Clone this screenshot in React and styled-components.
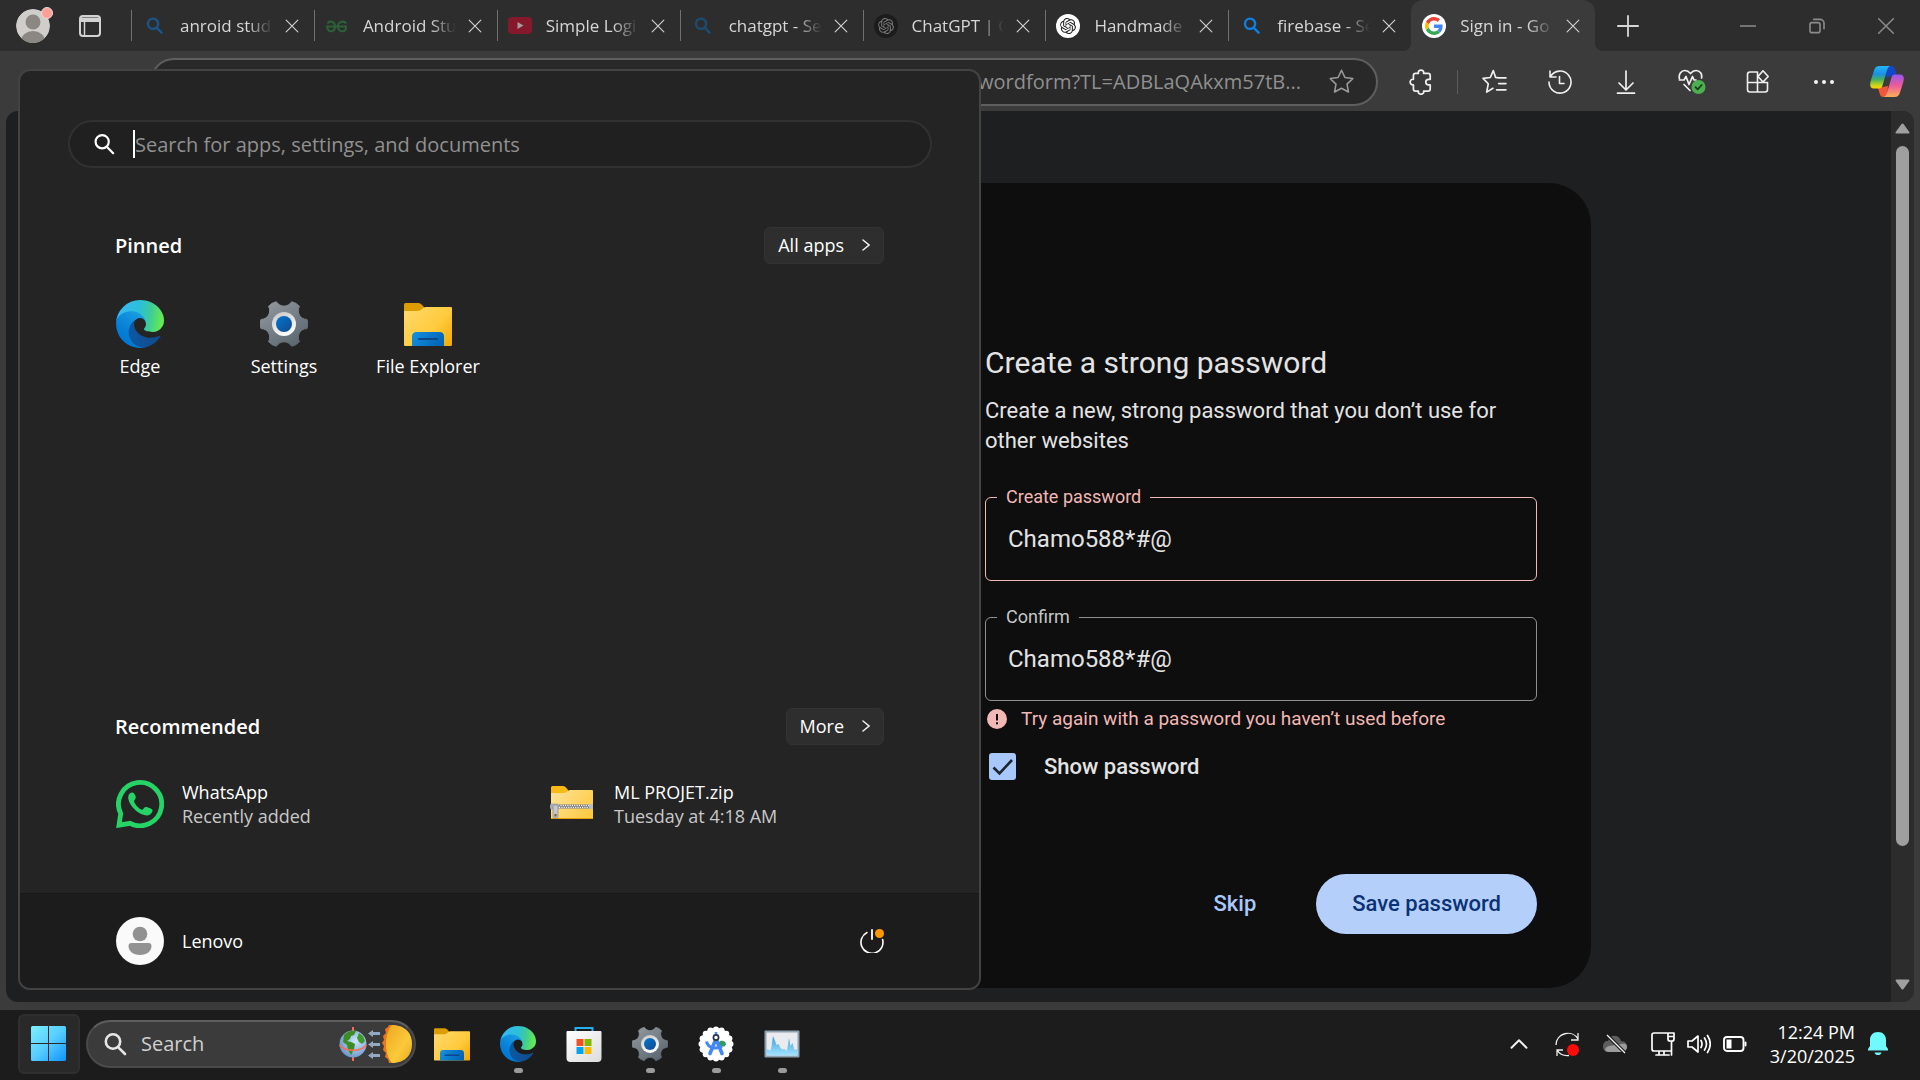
import React, { useState } from "react";
import styled, { createGlobalStyle, css } from "styled-components";

const GlobalStyle = createGlobalStyle`
  *, *::before, *::after { box-sizing: border-box; }
  body {
    margin: 0;
    background: #1c1c1c;
    color: #fff;
    font-family: "Open Sans", "Noto Sans", sans-serif;
    font-size: 18px;
    line-height: 24px;
  }
  button, input { font: inherit; color: inherit; }
  button { margin: 0; padding: 0; border: 0; background: none; cursor: pointer; }
  h1, h2, p, ul { margin: 0; padding: 0; font-weight: inherit; list-style: none; }
  svg { display: block; flex: none; }
`;

/* ---------- layout ---------- */

const Desktop = styled.div`
  position: relative;
  display: flex;
  flex-direction: column;
  min-height: 100vh;
  overflow: hidden;
`;

const Browser = styled.div`
  flex: 1;
  display: flex;
  flex-direction: column;
  background: #3b3b3b;
`;

const TabBar = styled.header`
  display: flex;
  align-items: center;
  height: 51px;
  padding-left: 16px;
  background: #2d2d2d;
`;

const ProfileButton = styled.button`
  margin-right: 26px;
`;

const WorkspaceButton = styled.button`
  margin-right: 30px;
`;

const TabStrip = styled.nav`
  display: flex;
  flex: 0 1 1464px;
  min-width: 0;
  height: 100%;
`;

const Tab = styled.div`
  position: relative;
  flex: 1 1 0;
  min-width: 0;
  display: flex;
  align-items: center;
  padding: 0 10px;

  ${(p) =>
    p.$active
      ? css`
          background: #3b3b3b;
          border-radius: 12px 12px 0 0;
          padding-left: 11px;
          &::before,
          &::after {
            content: "";
            position: absolute;
            bottom: 0;
            width: 8px;
            height: 8px;
          }
          &::before {
            right: 100%;
            background: radial-gradient(circle at 0 0, #2d2d2d 8px, #3b3b3b 8px);
          }
          &::after {
            left: 100%;
            background: radial-gradient(circle at 100% 0, #2d2d2d 8px, #3b3b3b 8px);
          }
        `
      : css`
          &::before {
            content: "";
            width: 1px;
            height: 31px;
            margin: 0 10px 0 -10px;
            background: #707070;
          }
        `}
`;

const TabTitle = styled.button`
  flex: 1;
  min-width: 0;
  display: flex;
  align-items: center;
  gap: 14px;
  text-align: left;
  color: #d6d6d6;
`;

const TabIcon = styled.span`
  width: 24px;
  display: grid;
  place-items: center;
  flex: none;
`;

const TabText = styled.span`
  flex: 1;
  min-width: 0;
  overflow: hidden;
  white-space: nowrap;
  font-size: 17px;
  mask-image: linear-gradient(to right, #000 72%, transparent 100%);
`;

const CloseTab = styled.button`
  width: 24px;
  height: 24px;
  display: grid;
  place-items: center;
  margin-left: 7px;
  color: #d0d0d0;
`;

const IconButton = styled.button`
  width: ${(p) => p.$w || 66}px;
  height: 48px;
  flex: none;
  display: grid;
  place-items: center;
  color: ${(p) => p.$color || "#f0f0f0"};
`;

const WindowControls = styled.div`
  display: flex;
  margin-left: auto;
`;

const Toolbar = styled.div`
  display: flex;
  align-items: center;
  height: 60px;
  padding: 1px 3px 0 11px;
`;

const AddressBar = styled.label`
  flex: 1;
  min-width: 0;
  display: flex;
  align-items: center;
  height: 48px;
  margin: 0 10px 0 7px;
  padding-left: 30px;
  border: 2px solid #5e5e5e;
  border-radius: 24px;
  background: #292929;
`;

const AddressInput = styled.input`
  flex: 1;
  min-width: 0;
  border: 0;
  outline: 0;
  padding: 0;
  background: none;
  text-align: right;
  font-size: 20px;
  line-height: 28px;
  color: #909090;
`;

const StarButton = styled(IconButton)`
  margin: 0 2px 0 7px;
`;

const Divider = styled.span`
  width: 1px;
  height: 24px;
  margin: 0 3px;
  background: #5c5c5c;
`;

const Viewport = styled.main`
  flex: 1;
  display: flex;
  margin: 0 6px 8px;
  border-radius: 12px;
  overflow: hidden;
  background: #1e1f20;
`;

const PageArea = styled.div`
  flex: 1;
  display: flex;
  justify-content: center;
  align-items: flex-start;
  padding: 72px 24px 14px;
  font-family: Roboto, sans-serif;
  color: #e3e3e3;
`;

const Card = styled.section`
  display: flex;
  justify-content: flex-end;
  width: 100%;
  max-width: 1285px;
  padding: 160px 54px 54px;
  border-radius: 42px;
  background: #0e0e0e;
`;

const Form = styled.form`
  width: 100%;
  max-width: 552px;
`;

const FormTitle = styled.h1`
  font-size: 30px;
  line-height: 40px;
`;

const FormText = styled.p`
  margin: 13px 0 32px;
  font-size: 22px;
  line-height: 30px;
`;

const Field = styled.fieldset`
  margin: 0;
  padding: 0 11px 8px;
  min-width: 0;
  border: 1px solid ${(p) => (p.$error ? "#f2b8b5" : "#8e918f")};
  border-radius: 6px;
  & + & { margin-top: 27px; }
`;

const FieldLegend = styled.legend`
  padding: 0 9px;
  font-size: 18px;
  line-height: 18px;
  color: ${(p) => (p.$error ? "#f2b8b5" : "#c4c7c5")};
`;

const FieldInput = styled.input`
  display: block;
  width: 100%;
  height: 66px;
  padding: 0 11px;
  border: 0;
  outline: 0;
  background: none;
  font-size: 24px;
`;

const ErrorText = styled.p`
  display: flex;
  align-items: center;
  gap: 14px;
  margin: 8px 0 24px;
  padding-left: 2px;
  font-size: 19px;
  line-height: 20px;
  color: #f2b8b5;
`;

const CheckRow = styled.label`
  display: flex;
  align-items: center;
  gap: 28px;
  padding-left: 4px;
  font-size: 22px;
  line-height: 27px;
  font-weight: 500;
`;

const CheckInput = styled.input`
  appearance: none;
  width: 27px;
  height: 27px;
  margin: 0;
  border: 2px solid #a8c7fa;
  border-radius: 3px;
  &:checked { background: #a8c7fa; }
`;

const CheckBoxWrap = styled.span`
  display: grid;
  & > * { grid-area: 1 / 1; }
  & > svg { pointer-events: none; }
`;

const Actions = styled.div`
  display: flex;
  justify-content: flex-end;
  gap: 24px;
  margin-top: 94px;
  font-size: 22px;
  font-weight: 500;
`;

const TextButton = styled.button`
  height: 60px;
  padding: 0 36px;
  border-radius: 30px;
  color: #a8c7fa;
`;

const FilledButton = styled(TextButton)`
  background: #b5cffb;
  color: #0a3275;
`;

const Scrollbar = styled.div`
  width: 23px;
  display: flex;
  flex-direction: column;
  align-items: center;
  padding: 12px 0;
  background: #2c2c2c;
`;

const ScrollThumb = styled.div`
  width: 13px;
  height: 700px;
  margin: 12px 0 auto;
  border-radius: 7px;
  background: #9f9f9f;
`;

/* ---------- start menu ---------- */

const StartMenu = styled.aside`
  position: absolute;
  left: 18px;
  bottom: 90px;
  width: 963px;
  display: flex;
  flex-direction: column;
  border: 2px solid #434343;
  border-radius: 12px;
  overflow: hidden;
  background: #242424;
`;

const MenuSearch = styled.label`
  display: flex;
  align-items: center;
  gap: 18px;
  height: 48px;
  margin: 49px 47px 0 48px;
  padding: 0 24px 0 23px;
  border: 2px solid #313131;
  border-radius: 24px;
  background: #202020;
`;

const MenuSearchInput = styled.input`
  flex: 1;
  min-width: 0;
  height: 28px;
  padding: 0;
  border: 0;
  border-left: 2px solid #fff;
  outline: 0;
  background: none;
  font-size: 20px;
  &::placeholder { color: #909090; opacity: 1; }
`;

const SectionHead = styled.div`
  display: flex;
  align-items: center;
  justify-content: space-between;
  padding: 0 95px;
`;

const SectionTitle = styled.h2`
  font-size: 20px;
  line-height: 28px;
  font-weight: 600;
`;

const MoreButton = styled.button`
  display: flex;
  align-items: center;
  gap: 18px;
  height: 37px;
  padding: 0 13px 2px;
  border: 1px solid #333;
  border-radius: 6px;
  background: #2e2e2e;
`;

const Pinned = styled.section`
  padding-top: 59px;
  min-height: 540px;
`;

const AppGrid = styled.ul`
  display: grid;
  grid-template-columns: repeat(6, 144px);
  padding: 30px 0 0 48px;
`;

const AppButton = styled.button`
  width: 100%;
  display: flex;
  flex-direction: column;
  align-items: center;
  gap: 6px;
  padding-top: 6px;
`;

const RecGrid = styled.ul`
  display: grid;
  grid-template-columns: 432px 1fr;
  padding: 35px 95px 65px 96px;
`;

const RecButton = styled.button`
  display: flex;
  align-items: center;
  gap: 18px;
  text-align: left;
`;

const RecNote = styled.small`
  display: block;
  font-size: inherit;
  color: #c8c8c8;
`;

const MenuFooter = styled.footer`
  display: flex;
  align-items: center;
  justify-content: space-between;
  height: 95px;
  padding: 0 95px 0 96px;
  border-top: 1px solid #181818;
  background: #1c1c1c;
`;

/* ---------- taskbar ---------- */

const Taskbar = styled.footer`
  display: flex;
  align-items: center;
  height: 70px;
  padding: 0 25px 2px 18px;
  background: #1c1c1c;
`;

const StartButton = styled.button`
  display: grid;
  place-items: center;
  width: 62px;
  height: 60px;
  margin-right: 6px;
  border: 2px solid #2f2f2f;
  border-radius: 6px;
  background: #292929;
`;

const TaskSearch = styled.label`
  display: flex;
  align-items: center;
  gap: 14px;
  width: 330px;
  height: 48px;
  margin-right: 3px;
  padding: 0 0 0 15px;
  border: 2px solid #4a4a4a;
  border-top-color: #5e5e5e;
  border-radius: 24px;
  background: #3b3b3b;
`;

const TaskSearchInput = styled.input`
  flex: 1;
  min-width: 0;
  padding: 0;
  border: 0;
  outline: 0;
  background: none;
  font-size: 20px;
  line-height: 28px;
  &::placeholder { color: #d0d0d0; opacity: 1; }
`;

const TaskApp = styled.button`
  position: relative;
  width: 66px;
  height: 60px;
  display: grid;
  place-items: center;
  ${(p) =>
    p.$running &&
    css`
      &::after {
        content: "";
        position: absolute;
        bottom: 1px;
        left: 29px;
        width: 9px;
        height: 5px;
        border-radius: 3px;
        background: #9a9a9a;
      }
    `}
`;

const Tray = styled.div`
  display: flex;
  align-items: center;
  margin-left: auto;
`;

const TrayGroup = styled.button`
  display: flex;
  gap: 12px;
  padding: 12px;
`;

const Clock = styled.button`
  width: 102px;
  padding-right: 6px;
  text-align: right;
  white-space: nowrap;
  line-height: 24px;
`;

/* ---------- icons ---------- */

const Line = ({ size = 24, w = 2, children, ...rest }) => (
  <svg width={size} height={size} viewBox="0 0 24 24" fill="none" stroke="currentColor"
    strokeWidth={w} strokeLinecap="round" strokeLinejoin="round" aria-hidden="true" {...rest}>
    {children}
  </svg>
);

const SearchGlyph = ({ size, color, w = 2.6 }) => (
  <Line size={size} w={w} color={color}>
    <circle cx="10" cy="9.5" r="7.2" />
    <path d="M15.3 15.3 22 22" />
  </Line>
);

const CloseGlyph = ({ size = 16 }) => (
  <Line size={size} w={2}><path d="M2 2 22 22M22 2 2 22" /></Line>
);

const EdgeIcon = ({ size = 48, id }) => (
  <svg width={size} height={size} viewBox="0 0 256 256" aria-hidden="true">
    <defs>
      <linearGradient id={`${id}a`} x1="60" y1="177" x2="241" y2="177" gradientUnits="userSpaceOnUse">
        <stop stopColor="#0c59a4" /><stop offset="1" stopColor="#114a8b" />
      </linearGradient>
      <linearGradient id={`${id}b`} x1="150" y1="90" x2="45" y2="220" gradientUnits="userSpaceOnUse">
        <stop stopColor="#1b9de2" /><stop offset=".2" stopColor="#1595df" />
        <stop offset=".7" stopColor="#0680d7" /><stop offset="1" stopColor="#0078d4" />
      </linearGradient>
      <linearGradient id={`${id}c`} x1="10" y1="80" x2="245" y2="120" gradientUnits="userSpaceOnUse">
        <stop stopColor="#35b8f6" /><stop offset=".45" stopColor="#2cbfd9" />
        <stop offset=".7" stopColor="#3ccb9c" /><stop offset="1" stopColor="#66eb4e" />
      </linearGradient>
    </defs>
    <path fill={`url(#${id}a)`} d="M231 190.5c-3.4 1.8-6.9 3.4-10.5 4.7a101.9 101.9 0 0 1-35.9 6.5c-47.3 0-88.5-32.6-88.5-74.3a31.5 31.5 0 0 1 16.4-27.7c-42.8 1.8-53.8 46.4-53.8 72.5 0 73.9 68.1 81.4 82.8 81.4 7.9 0 19.8-2.3 27-4.6l1.3-.4a128.3 128.3 0 0 0 66.6-52.8 4 4 0 0 0-5.4-5.3z" />
    <path fill={`url(#${id}b)`} d="M105.7 241.4a79.2 79.2 0 0 1-22.7-21.3 80.7 80.7 0 0 1 29.5-120.4c3.1-1.5 8.5-4.1 15.5-4a32.4 32.4 0 0 1 25.7 13 31.9 31.9 0 0 1 6.4 18.7c0-.2 24.5-79.6-80-79.6-43.9 0-80 41.7-80 78.2a130.2 130.2 0 0 0 12.1 56 128 128 0 0 0 156.4 67.1 75.6 75.6 0 0 1-62.8-7.7z" />
    <path fill={`url(#${id}c)`} d="M152.3 148.9c-.8 1-3.3 2.5-3.3 5.7 0 2.6 1.7 5.1 4.7 7.2 14.4 10 41.5 8.7 41.6 8.7a59.6 59.6 0 0 0 30.3-8.4 61.4 61.4 0 0 0 30.4-52.9c.3-22.4-8-37.3-11.3-43.9C223.5 23.8 177.7 0 128 0A128 128 0 0 0 0 126.2c.5-36.5 36.8-66 80-66 3.5 0 23.5.3 42 10 16.3 8.6 24.9 19 30.9 29.2 6.2 10.7 7.3 24.2 7.3 29.5 0 5.4-2.8 13.4-7.9 20z" />
  </svg>
);

const gearPath = (() => {
  const p = (r, deg) => {
    const a = (deg * Math.PI) / 180;
    return `${(24 + r * Math.cos(a)).toFixed(2)} ${(24 + r * Math.sin(a)).toFixed(2)}`;
  };
  let d = `M${p(23.5, -11)}`;
  for (let a = 0; a < 360; a += 60) {
    d += `Q${p(24.6, a)} ${p(23.5, a + 11)}C${p(16.8, a + 17)} ${p(16.8, a + 43)} ${p(23.5, a + 49)}`;
  }
  return `${d}Z`;
})();

const SettingsIcon = ({ size = 48, id }) => (
  <svg width={size} height={size} viewBox="0 0 48 48" aria-hidden="true">
    <defs>
      <linearGradient id={`${id}a`} x1="8" y1="4" x2="38" y2="46" gradientUnits="userSpaceOnUse">
        <stop stopColor="#8f959b" /><stop offset="1" stopColor="#5a6670" />
      </linearGradient>
      <linearGradient id={`${id}b`} x1="18" y1="14" x2="28" y2="36" gradientUnits="userSpaceOnUse">
        <stop stopColor="#cfcfcf" /><stop offset="1" stopColor="#fff" />
      </linearGradient>
      <linearGradient id={`${id}c`} x1="18" y1="18" x2="30" y2="30" gradientUnits="userSpaceOnUse">
        <stop stopColor="#0370c8" /><stop offset="1" stopColor="#114f96" />
      </linearGradient>
    </defs>
    <path d={gearPath} fill={`url(#${id}a)`} stroke={`url(#${id}a)`} strokeWidth="1" strokeLinejoin="round" />
    <circle cx="24" cy="24" r="12" fill={`url(#${id}b)`} />
    <circle cx="24" cy="24" r="8" fill={`url(#${id}c)`} />
  </svg>
);

const FolderIcon = ({ size = 48, id }) => (
  <svg width={size} height={size} viewBox="0 0 48 48" aria-hidden="true">
    <defs>
      <linearGradient id={`${id}a`} x1="4" y1="8" x2="46" y2="46" gradientUnits="userSpaceOnUse">
        <stop stopColor="#ffd869" /><stop offset=".6" stopColor="#ffca3c" /><stop offset="1" stopColor="#f2ab00" />
      </linearGradient>
      <linearGradient id={`${id}b`} x1="10" y1="32" x2="36" y2="48" gradientUnits="userSpaceOnUse">
        <stop stopColor="#148fdd" /><stop offset="1" stopColor="#0063b6" />
      </linearGradient>
    </defs>
    <path fill="#dd9c02" d="M0 4.5Q0 3 1.5 3H14q2 0 3 1l3 3v6H0z" />
    <path fill={`url(#${id}a)`} d="M0 11h13.5q2 0 3.2-1l3-2.3q.8-.7 2-.7H47q1 0 1 1v37q0 1-1 1H1q-1 0-1-1z" />
    <path fill={`url(#${id}b)`} d="M8 46v-9.5q0-4.5 4.5-4.5h23q4.5 0 4.5 4.5V46z" />
    <path d="M15 39h18" stroke="#0f4585" strokeWidth="2" strokeLinecap="round" />
  </svg>
);

const ZipIcon = () => (
  <svg width="48" height="48" viewBox="0 0 48 48" aria-hidden="true">
    <defs>
      <linearGradient id="zipBody" x1="4" y1="10" x2="44" y2="40" gradientUnits="userSpaceOnUse">
        <stop stopColor="#ffe39a" /><stop offset="1" stopColor="#ffc83a" />
      </linearGradient>
    </defs>
    <path fill="#fbb917" d="M3 7.5Q3 6 4.5 6H15q2 0 3 1.5L20 10v6H3z" />
    <path fill="url(#zipBody)" d="M3 13h13q1.5 0 2.5-1l1.5-1.2q1-.8 2-.8h22q1 0 1 1v27q0 1-1 1H4q-1 0-1-1z" />
    <path d="M3 38.5h42" stroke="#e8a100" strokeWidth="1" />
    <path d="M10 26.5h32" stroke="#6a6a6a" strokeWidth="4" />
    <path d="M10 25.5h32M11 27.5h31" stroke="#f4f4f4" strokeWidth="1.5" strokeDasharray="1.3 1" />
    <rect x="41" y="24" width="4" height="5" fill="#b9bcc0" />
    <rect x="2" y="23.5" width="9" height="6" rx="2" fill="#a9adb1" />
    <rect x="5" y="25" width="5" height="13" rx="1" fill="#c5c8cb" stroke="#85898d" strokeWidth=".7" />
    <rect x="6.5" y="34" width="2" height="2.5" fill="#7d6320" />
  </svg>
);

const WhatsAppIcon = () => (
  <svg width="48" height="48" viewBox="0 0 48 48" aria-hidden="true">
    <path d="M4.7 33.6A21.6 21.6 0 1 1 14.2 43.3L3 45.2Z" fill="none" stroke="#25d366" strokeWidth="4.8" />
    <path fill="#25d366" d="M12.2 17c.2-3 2.5-4.5 4.3-4.4 2 .2 3.5 3.9 3.3 5.2-.3 1.7-1.8 2.5-1.8 3.2.5 3 4.5 7.8 8 8.8 1 .2 2-2.5 3.5-2.8 1.5-.3 6.5 1.8 7 3 .3 1.5-1.5 5.5-5.5 5.4C22 35 12 24.5 12.2 17z" />
  </svg>
);

const UserIcon = () => (
  <svg width="48" height="48" viewBox="0 0 48 48" aria-hidden="true">
    <circle cx="24" cy="24" r="24" fill="#fafafa" />
    <circle cx="24" cy="17" r="7.3" fill="#929292" />
    <path fill="#929292" d="M15.5 26h17q3 0 3 3c0 5-4.5 9-11.5 9s-11.5-4-11.5-9q0-3 3-3z" />
  </svg>
);

const PowerIcon = () => (
  <svg width="24" height="24" viewBox="0 0 24 24" fill="none" aria-hidden="true">
    <path d="M7 3.5A11 11 0 1 0 22.6 10.500" stroke="#fff" strokeWidth="1.6" strokeLinecap="round" />
    <path d="M12 1v9" stroke="#e8e8e8" strokeWidth="2" strokeLinecap="round" />
    <circle cx="19.5" cy="4.5" r="4.5" fill="#ff9800" />
  </svg>
);

const ProfileIcon = () => (
  <svg width="37" height="37" viewBox="0 0 37 37" aria-hidden="true">
    <defs><clipPath id="profileClip"><circle cx="17" cy="19" r="17" /></clipPath></defs>
    <g clipPath="url(#profileClip)">
      <circle cx="17" cy="19" r="17" fill="#d0cecb" />
      <circle cx="17" cy="15" r="7.5" fill="#8b8783" />
      <ellipse cx="17" cy="34" rx="12" ry="10" fill="#8b8783" />
    </g>
    <circle cx="31" cy="6" r="5.5" fill="#ff9f97" stroke="#e8dcd8" strokeWidth="1" />
  </svg>
);

const WorkspaceIcon = () => (
  <svg width="22" height="22" viewBox="0 0 22 22" aria-hidden="true">
    <rect x="1" y="1" width="20" height="20" rx="3" fill="none" stroke="#d2d2d2" strokeWidth="2" />
    <path d="M1 2.5h20V7H1z" fill="#d2d2d2" />
    <path d="M5.5 7v14" stroke="#d2d2d2" strokeWidth="1.5" />
  </svg>
);

const GfgIcon = () => (
  <svg width="24" height="24" viewBox="0 0 24 24" fill="none" stroke="#2c6137" strokeWidth="2" aria-hidden="true">
    <path d="M1 12.5h21" />
    <path d="M2.5 9.500C4 6.500 10 7 10 12.500S4.500 18.500 2.500 15V12.500" />
    <path d="M21 9.500C19.500 6.500 13 7 13 12.500s6 6 8 2.500V12.500" />
  </svg>
);

const YouTubeIcon = () => (
  <svg width="24" height="17" viewBox="0 0 24 17" aria-hidden="true">
    <rect width="24" height="17" rx="4" fill="#86182c" />
    <path d="M9.5 5v7l6-3.5z" fill="#a89a9d" />
  </svg>
);

const OpenAiIcon = ({ bg, fg }) => (
  <svg width="24" height="24" viewBox="0 0 36 36" aria-hidden="true">
    <circle cx="18" cy="18" r="18" fill={bg} />
    <path transform="translate(6 6)" fill={fg} d="M22.2819 9.8211a5.9847 5.9847 0 0 0-.5157-4.9108 6.0462 6.0462 0 0 0-6.5098-2.9A6.0651 6.0651 0 0 0 4.9807 4.1818a5.9847 5.9847 0 0 0-3.9977 2.9 6.0462 6.0462 0 0 0 .7427 7.0966 5.98 5.98 0 0 0 .511 4.9107 6.051 6.051 0 0 0 6.5146 2.9001A5.9847 5.9847 0 0 0 13.2599 24a6.0557 6.0557 0 0 0 5.7718-4.2058 5.9894 5.9894 0 0 0 3.9977-2.9001 6.0557 6.0557 0 0 0-.7475-7.0729zm-9.022 12.6081a4.4755 4.4755 0 0 1-2.8764-1.0408l.1419-.0804 4.7783-2.7582a.7948.7948 0 0 0 .3927-.6813v-6.7369l2.02 1.1686a.071.071 0 0 1 .038.052v5.5826a4.504 4.504 0 0 1-4.4945 4.4944zm-9.6607-4.1254a4.4708 4.4708 0 0 1-.5346-3.0137l.142.0852 4.783 2.7582a.7712.7712 0 0 0 .7806 0l5.8428-3.3685v2.3324a.0804.0804 0 0 1-.0332.0615L9.74 19.9502a4.4992 4.4992 0 0 1-6.1408-1.6464zM2.3408 7.8956a4.485 4.485 0 0 1 2.3655-1.9728V11.6a.7664.7664 0 0 0 .3879.6765l5.8144 3.3543-2.0201 1.1685a.0757.0757 0 0 1-.071 0l-4.8303-2.7865A4.504 4.504 0 0 1 2.3408 7.872zm16.5963 3.8558L13.1038 8.364 15.1192 7.2a.0757.0757 0 0 1 .071 0l4.8303 2.7913a4.4944 4.4944 0 0 1-.6765 8.1042v-5.6772a.79.79 0 0 0-.407-.667zm2.0107-3.0231l-.142-.0852-4.7735-2.7818a.7759.7759 0 0 0-.7854 0L9.409 9.2297V6.8974a.0662.0662 0 0 1 .0284-.0615l4.8303-2.7866a4.4992 4.4992 0 0 1 6.6802 4.66zM8.3065 12.863l-2.02-1.1638a.0804.0804 0 0 1-.038-.0567V6.0742a4.4992 4.4992 0 0 1 7.3757-3.4537l-.142.0805L8.704 5.459a.7948.7948 0 0 0-.3927.6813zm1.0976-2.3654l2.602-1.4998 2.6069 1.4998v2.9994l-2.5974 1.4997-2.6067-1.4997Z" />
  </svg>
);

const GoogleIcon = () => (
  <svg width="24" height="24" viewBox="-8 -8 64 64" aria-hidden="true">
    <circle cx="24" cy="24" r="32" fill="#fff" />
    <path fill="#EA4335" d="M24 9.5c3.54 0 6.71 1.22 9.21 3.6l6.85-6.85C35.9 2.38 30.47 0 24 0 14.62 0 6.51 5.38 2.56 13.22l7.98 6.19C12.43 13.72 17.74 9.5 24 9.5z" />
    <path fill="#4285F4" d="M46.98 24.55c0-1.57-.15-3.09-.38-4.55H24v9.02h12.94c-.58 2.96-2.26 5.48-4.78 7.18l7.73 6c4.51-4.18 7.09-10.36 7.09-17.65z" />
    <path fill="#FBBC05" d="M10.53 28.59c-.48-1.45-.76-2.99-.76-4.59s.27-3.14.76-4.59l-7.98-6.19C.92 16.46 0 20.12 0 24c0 3.88.92 7.54 2.56 10.78l7.97-6.19z" />
    <path fill="#34A853" d="M24 48c6.48 0 11.93-2.13 15.89-5.81l-7.73-6c-2.15 1.45-4.92 2.3-8.16 2.3-6.26 0-11.57-4.22-13.47-9.91l-7.98 6.19C6.51 42.62 14.62 48 24 48z" />
  </svg>
);

const CopilotIcon = () => (
  <svg width="34" height="31" viewBox="0 0 34 31" aria-hidden="true">
    <defs>
      <linearGradient id="cpLeft" x1="0" y1="0" x2="0" y2="1">
        <stop stopColor="#22b8f2" /><stop offset=".35" stopColor="#1a8fe6" />
        <stop offset=".6" stopColor="#45b061" /><stop offset=".85" stopColor="#c9d41a" /><stop offset="1" stopColor="#ffd500" />
      </linearGradient>
      <linearGradient id="cpRight" x1="0" y1="0" x2="0" y2="1">
        <stop stopColor="#9a55f0" /><stop offset=".5" stopColor="#ee5b98" /><stop offset="1" stopColor="#ffb057" />
      </linearGradient>
    </defs>
    <path fill="#1546c8" d="M16 0h5c2.5 0 3.6 1.4 4.3 4l1.2 4.6-6 1.4-4 2z" />
    <path fill="#f2573a" d="M8 22l10-2-1 11h-3.5c-2.4 0-3.3-1.4-4-4z" />
    <path fill="url(#cpLeft)" d="M9.5 0H20c-2 1-2.7 3.2-3.5 6l-4 13.5c-.7 2.2-1.6 3-3.5 3H4c-4 0-4.3-3.5-3.3-7.5L4 4.5C4.9 1.3 6.6 0 9.5 0z" />
    <path fill="url(#cpRight)" d="M25 8.5h5c4 0 4.3 3.5 3.3 7.5L30 26.5c-.9 3.2-2.6 4.5-5.5 4.5H14c2-1 2.7-3.2 3.5-6l4-13.5c.7-2.2 1.6-3 3.5-3z" />
  </svg>
);

const HeartIcon = () => (
  <svg width="28" height="28" viewBox="0 0 28 28" fill="none" stroke="#f0f0f0" strokeWidth="1.7"
    strokeLinecap="round" strokeLinejoin="round" aria-hidden="true">
    <path d="M1.5 11C.3 6.5 3 2.5 7 2.5c2.5 0 4 1.2 5.5 3 1.5-1.8 3-3 5.5-3 4 0 6.5 3.5 5.5 7.5" />
    <path d="M1.5 12H6l2-3.5 3 8 3.5-8 1.5 3.5h2M6 16.5l6 6" />
    <circle cx="20.5" cy="19" r="7" fill="#4caf50" stroke="none" />
    <path d="m17.5 19.2 2.2 2.2 4-4.4" stroke="#173a19" />
  </svg>
);

const StoreIcon = () => (
  <svg width="36" height="36" viewBox="0 0 36 36" aria-hidden="true">
    <defs>
      <linearGradient id="storeBag" x1="0" y1="0" x2="1" y2="1"><stop stopColor="#fff" /><stop offset="1" stopColor="#dcdcdc" /></linearGradient>
    </defs>
    <path d="M9.5 7V2h17v5" fill="none" stroke="#25aef0" strokeWidth="2" />
    <path fill="url(#storeBag)" d="M.5 6q0-1 1-1h33q1 0 1 1v26q0 4-4 4h-27q-4 0-4-4z" />
    <path fill="#f25022" d="M10.500 13h7v7h-7z" /><path fill="#7fba00" d="M18.500 13h7v7h-7z" />
    <path fill="#00a4ef" d="M10.500 21h7v7h-7z" /><path fill="#ffb900" d="M18.500 21h7v7h-7z" />
  </svg>
);

const scallop = Array.from({ length: 16 }, (_, i) => {
  const a = (i * Math.PI) / 8;
  return [18 + 14.5 * Math.cos(a), 18 + 14.5 * Math.sin(a)];
});

const StudioIcon = () => (
  <svg width="36" height="36" viewBox="0 0 36 36" aria-hidden="true">
    <circle cx="18" cy="18" r="16" fill="#fff" />
    {scallop.map(([x, y]) => <circle key={`${x}-${y}`} cx={x} cy={y} r="3" fill="#fff" />)}
    <path fill="#2f9e57" d="M21 16c2-2 7-1.500 7 2.500l-1.500 2h-5z" />
    <path d="M17.500 14 12 27.500M18.500 14 24 27.500" stroke="#4386f5" strokeWidth="3.6" strokeLinecap="round" />
    <path d="M8.500 15.500c1.500 7 10 8 15.500 4.500" stroke="#4386f5" strokeWidth="3" fill="none" />
    <path d="M18 6v4" stroke="#4386f5" strokeWidth="2.5" />
    <circle cx="18" cy="11.5" r="2.6" fill="#fff" stroke="#26334d" strokeWidth="1.7" />
  </svg>
);

const MonitorAppIcon = () => (
  <svg width="36" height="36" viewBox="0 0 36 36" aria-hidden="true">
    <defs>
      <linearGradient id="chartFill" x1="0" y1="0" x2="0" y2="1"><stop stopColor="#3aa0d8" /><stop offset="1" stopColor="#a4e2ff" /></linearGradient>
    </defs>
    <rect x=".5" y="4.5" width="35" height="27" rx="1" fill="#8fa0af" />
    <rect x="2.5" y="6.5" width="31" height="23" fill="#e9ebef" />
    <path fill="url(#chartFill)" d="M2.5 29.5V23l4 1.5 1-4L9 10l2.5 6 1 3 2-1 2 4 2 1.5 2-.5 2 2 1.5-6 1-7 1.5 8 2-3 2 7 3-1v6.5z" />
  </svg>
);

const WindowsIcon = () => (
  <svg width="36" height="36" viewBox="0 0 36 36" aria-hidden="true">
    <defs>
      <linearGradient id="winLogo" x1="0" y1="0" x2="36" y2="36" gradientUnits="userSpaceOnUse">
        <stop stopColor="#7df0ff" /><stop offset=".5" stopColor="#54ccff" /><stop offset="1" stopColor="#0a90ff" />
      </linearGradient>
    </defs>
    <path fill="url(#winLogo)" d="M0 1.500Q0 0 1.500 0H17v17H0zM18 0h15.500Q35 0 35 1.500V17H18zM0 18h17v17H1.500Q0 35 0 33.500zM18 18h17v15.500q0 1.500-1.500 1.500H18z" />
  </svg>
);

const EquinoxArt = () => (
  <svg width="76" height="40" viewBox="0 0 76 40" aria-hidden="true">
    <defs>
      <radialGradient id="globe" cx=".6" cy=".4" r=".7"><stop stopColor="#cfe6ff" /><stop offset="1" stopColor="#5f8fc4" /></radialGradient>
      <linearGradient id="sun" x1="0" y1="0" x2="1" y2="1"><stop stopColor="#eda820" /><stop offset=".6" stopColor="#fbc93a" /><stop offset="1" stopColor="#e7a91c" /></linearGradient>
    </defs>
    <path d="M15 3v34" stroke="#ff6a52" strokeWidth="2" />
    <circle cx="15" cy="20" r="13.5" fill="url(#globe)" />
    <path fill="#3d8c22" d="M6 11c3-4 9-5 12-4l-2 4-3 1-1 3-3 2 4 1 4 2-1 5-3 6-3-5-1-5-4-3z" />
    <path fill="#3f9a2a" d="M21 9l4 3 2 5-3 3-3-2-2-4z" />
    <path d="M1.5 21c6 7 21 7 27 0" fill="none" stroke="#ff6a52" strokeWidth="1.5" />
    <g fill="#93a9c2">
      <path d="M30 9.5 35 6v2h7v3h-7v2z" /><path d="M30 20.5 35 17v2h7v3h-7v2z" /><path d="M30 31.5 35 28v2h7v3h-7v2z" />
    </g>
    <path fill="#e8781c" d="M51 1l6 0v38h-6l-1-4-3-2 1-4-3-3 1-4-2-3 2-3-1-4 3-3-1-4 3-2z" />
    <path fill="url(#sun)" d="M54 1c14 0 20 9 20 19s-6 19-20 19C46 30 46 10 54 1z" />
  </svg>
);

const SyncIcon = () => (
  <svg width="26" height="26" viewBox="0 0 26 26" fill="none" stroke="#f0f0f0" strokeWidth="1.3" aria-hidden="true">
    <path d="M2 14C2 2 18-2 24 8M24 2v7h-7M3 25v-6h6M3 19c3 5 7 6 12 5.5" />
    <circle cx="19" cy="19" r="6" fill="#ff0a0a" stroke="none" />
  </svg>
);

const CloudOffIcon = () => (
  <svg width="24" height="24" viewBox="0 0 24 24" aria-hidden="true">
    <path fill="#5d5d5d" d="M5 9C7 2 16 2 18 9c4 0 6 3 6 5.5S22 20 19 20H5c-3 0-5-2-5-5.500S2 9 5 9z" />
    <path fill="#9c9c9c" d="M3 19c-2-2 0-4 3-5l12-2c5-1 6 1 6 3s-2 5-5 5H5z" />
    <path d="m4 3 18 18" stroke="#1c1c1c" strokeWidth="3.5" />
    <path d="m4 3 18 18" stroke="#f4f4f4" strokeWidth="1.3" />
  </svg>
);

const BellIcon = () => (
  <svg width="20" height="24" viewBox="0 0 20 24" fill="#6ffaff" aria-hidden="true">
    <path d="M10 0c5 0 8 3.5 8 8v6l2 3v1.5H0V17l2-3V8c0-4.5 3-8 8-8zM6.5 20.5h7c-.5 2-2 2.5-3.5 2.5s-3-.5-3.5-2.5z" />
  </svg>
);

const Chevron = () => (
  <svg width="8" height="14" viewBox="0 0 8 14" fill="none" stroke="#f0f0f0" strokeWidth="1.5" strokeLinecap="round" aria-hidden="true">
    <path d="m1 2 6 5-6 5" />
  </svg>
);

const ErrorIcon = () => (
  <svg width="20" height="20" viewBox="0 0 20 20" aria-hidden="true">
    <circle cx="10" cy="10" r="10" fill="#f2b8b5" />
    <path d="M9 5h2v6.5H9zM9 13.3h2v2H9z" fill="#0e0e0e" />
  </svg>
);

const ScrollArrow = ({ down }) => (
  <svg width="15" height="11" viewBox="0 0 15 11" aria-hidden="true">
    <path fill="#a0a0a0" d={down ? "M1.5.5h12q1.5 0 .8 1.5L8.5 10q-1 1-2 0L.7 2Q0 .5 1.5.5z" : "M1.5 10.5h12q1.5 0 .8-1.5L8.5 1q-1-1-2 0L.7 9Q0 10.5 1.5 10.5z"} />
  </svg>
);

/* ---------- data ---------- */

const tabs = [
  { title: "anroid studi", icon: <SearchGlyph size={17} w={3.4} color="#1b5588" /> },
  { title: "Android Stu", icon: <GfgIcon /> },
  { title: "Simple Logi", icon: <YouTubeIcon /> },
  { title: "chatgpt - Se", icon: <SearchGlyph size={17} w={3.4} color="#1d4c72" /> },
  { title: "ChatGPT | C", icon: <OpenAiIcon bg="#1c1c1c" fg="#777" /> },
  { title: "Handmade", icon: <OpenAiIcon bg="#fff" fg="#222" /> },
  { title: "firebase - Se", icon: <SearchGlyph size={17} w={3.4} color="#0f7fe0" /> },
  { title: "Sign in - Go", icon: <GoogleIcon />, active: true },
];

const pinned = [
  { name: "Edge", icon: <EdgeIcon id="pinEdge" /> },
  { name: "Settings", icon: <SettingsIcon id="pinGear" /> },
  { name: "File Explorer", icon: <FolderIcon id="pinFolder" /> },
];

const recommended = [
  { name: "WhatsApp", note: "Recently added", icon: <WhatsAppIcon /> },
  { name: "ML PROJET.zip", note: "Tuesday at 4:18 AM", icon: <ZipIcon /> },
];

const taskApps = [
  { name: "File Explorer", icon: <FolderIcon size={36} id="tbFolder" /> },
  { name: "Edge", icon: <EdgeIcon size={36} id="tbEdge" />, running: true },
  { name: "Microsoft Store", icon: <StoreIcon /> },
  { name: "Settings", icon: <SettingsIcon size={36} id="tbGear" />, running: true },
  { name: "Android Studio", icon: <StudioIcon />, running: true },
  { name: "Resource Monitor", icon: <MonitorAppIcon />, running: true },
];

/* ---------- sections ---------- */

function BrowserTabs() {
  return (
    <TabBar>
      <ProfileButton aria-label="Profile"><ProfileIcon /></ProfileButton>
      <WorkspaceButton aria-label="Tab actions"><WorkspaceIcon /></WorkspaceButton>
      <TabStrip aria-label="Tabs">
        {tabs.map((t) => (
          <Tab key={t.title} $active={t.active}>
            <TabTitle>
              <TabIcon>{t.icon}</TabIcon>
              <TabText>{t.title}</TabText>
            </TabTitle>
            <CloseTab aria-label="Close tab"><CloseGlyph size={14} /></CloseTab>
          </Tab>
        ))}
      </TabStrip>
      <IconButton aria-label="New tab" $color="#d6d6d6">
        <Line size={22} w={2}><path d="M12 1v22M1 12h22" /></Line>
      </IconButton>
      <WindowControls>
        <IconButton $w={69} $color="#8c8c8c" aria-label="Minimize">
          <Line size={16} w={2.4}><path d="M1 12h22" /></Line>
        </IconButton>
        <IconButton $w={69} $color="#8c8c8c" aria-label="Restore">
          <Line size={16} w={2.4}>
            <rect x="1.5" y="7" width="15" height="15" rx="3" />
            <path d="M7 2h9.5a6 6 0 0 1 6 6v8" />
          </Line>
        </IconButton>
        <IconButton $w={69} $color="#8c8c8c" aria-label="Close">
          <Line size={16} w={2.2}><path d="M1 1 23 23M23 1 1 23" /></Line>
        </IconButton>
      </WindowControls>
    </TabBar>
  );
}

function BrowserToolbar() {
  return (
    <Toolbar>
      <IconButton aria-label="Back"><Line w={1.7}><path d="M22 12H3M10 4l-8 8 8 8" /></Line></IconButton>
      <IconButton aria-label="Refresh"><Line w={1.7}><path d="M20.5 8A10 10 0 1 0 22 12M21 1v7h-7" /></Line></IconButton>
      <AddressBar>
        <Line size={22} w={2}><rect x="5" y="9" width="14" height="12" rx="2" /><path d="M8 9V5a4 4 0 0 1 8 0v4" /></Line>
        <AddressInput aria-label="Address" defaultValue="wordform?TL=ADBLaQAkxm57tB..." />
        <StarButton aria-label="Favorite" $color="#9a9a9a">
          <Line size={25} w={1.5}><path d="m12 1.2 3.3 7 7.5 1-5.5 5.3 1.4 7.6L12 18.5l-6.7 3.6 1.4-7.6L1.2 9.2l7.5-1z" /></Line>
        </StarButton>
      </AddressBar>
      <IconButton aria-label="Extensions">
        <Line size={26} w={1.6}><path d="M7 4h2.6C8.7 0 15.3 0 14.4 4H18.5Q20.5 4 20.5 6V9.5H19a2.6 2.6 0 0 0 0 5.2h1.5V18.5Q20.5 20.5 18.5 20.5H14.4c.9 3.7-5.7 3.7-4.800 0H7Q5 20.5 5 18.5V14.7C1 15.3 1 8.9 5 9.5V6Q5 4 7 4z" /></Line>
      </IconButton>
      <Divider />
      <IconButton aria-label="Favorites">
        <Line size={25} w={1.6}><path d="M13 8 10.8 1.5 8 8.2 1 9l5 5.2-1.5 8L10.5 18.5M13 8l3 .5h7M16 14h7M14 20h9" /></Line>
      </IconButton>
      <IconButton aria-label="History">
        <Line w={1.6}><path d="M2.5 6.5A11 11 0 1 1 1 12M2 1v6h6M11.5 6.5v7H16" /></Line>
      </IconButton>
      <IconButton aria-label="Downloads">
        <Line w={1.7}><path d="M12 1v18M5 13l7 7 7-7M3.5 23.2h17" /></Line>
      </IconButton>
      <IconButton aria-label="Browser essentials"><HeartIcon /></IconButton>
      <IconButton aria-label="Apps">
        <Line w={1.6}><path d="M11.5 2H4Q1.5 2 1.5 4.5v15Q1.5 22 4 22h15q2.5 0 2.5-2.5V12.5h-20M11.5 2v20M17 .8l5.2 5.7L17 12l-5-5.5z" /></Line>
      </IconButton>
      <IconButton aria-label="More">
        <svg width="20" height="4" viewBox="0 0 20 4" fill="#f4f4f4" aria-hidden="true"><circle cx="2" cy="2" r="2" /><circle cx="10" cy="2" r="2" /><circle cx="18" cy="2" r="2" /></svg>
      </IconButton>
      <IconButton $w={60} aria-label="Copilot"><CopilotIcon /></IconButton>
    </Toolbar>
  );
}

function PasswordField({ id, label, error }) {
  return (
    <Field $error={error}>
      <FieldLegend $error={error}><label htmlFor={id}>{label}</label></FieldLegend>
      <FieldInput id={id} type="text" defaultValue="Chamo588*#@" />
    </Field>
  );
}

function SignInPage() {
  const [shown, setShown] = useState(true);
  return (
    <PageArea>
      <Card>
        <Form onSubmit={(e) => e.preventDefault()}>
          <FormTitle>Create a strong password</FormTitle>
          <FormText>Create a new, strong password that you don’t use for other websites</FormText>
          <PasswordField id="new-password" label="Create password" error />
          <PasswordField id="confirm-password" label="Confirm" />
          <ErrorText><ErrorIcon />Try again with a password you haven’t used before</ErrorText>
          <CheckRow>
            <CheckBoxWrap>
              <CheckInput type="checkbox" checked={shown} onChange={(e) => setShown(e.target.checked)} />
              {shown && (
                <svg width="27" height="27" viewBox="0 0 27 27" fill="none" stroke="#1c2430" strokeWidth="2.6" aria-hidden="true">
                  <path d="m4.5 14.5 6 6L23 7" />
                </svg>
              )}
            </CheckBoxWrap>
            Show password
          </CheckRow>
          <Actions>
            <TextButton type="button">Skip</TextButton>
            <FilledButton type="submit">Save password</FilledButton>
          </Actions>
        </Form>
      </Card>
    </PageArea>
  );
}

function Menu() {
  return (
    <StartMenu aria-label="Start">
      <MenuSearch>
        <SearchGlyph size={22} color="#fff" w={2.4} />
        <MenuSearchInput type="text" placeholder="Search for apps, settings, and documents" />
      </MenuSearch>
      <Pinned>
        <SectionHead>
          <SectionTitle>Pinned</SectionTitle>
          <MoreButton>All apps<Chevron /></MoreButton>
        </SectionHead>
        <AppGrid>
          {pinned.map((a) => (
            <li key={a.name}><AppButton>{a.icon}{a.name}</AppButton></li>
          ))}
        </AppGrid>
      </Pinned>
      <section>
        <SectionHead>
          <SectionTitle>Recommended</SectionTitle>
          <MoreButton>More<Chevron /></MoreButton>
        </SectionHead>
        <RecGrid>
          {recommended.map((r) => (
            <li key={r.name}>
              <RecButton>{r.icon}<span>{r.name}<RecNote>{r.note}</RecNote></span></RecButton>
            </li>
          ))}
        </RecGrid>
      </section>
      <MenuFooter>
        <RecButton><UserIcon />Lenovo</RecButton>
        <button aria-label="Power"><PowerIcon /></button>
      </MenuFooter>
    </StartMenu>
  );
}

function SystemTaskbar() {
  return (
    <Taskbar>
      <StartButton aria-label="Start"><WindowsIcon /></StartButton>
      <TaskSearch>
        <SearchGlyph size={24} color="#e6e6e6" w={2.6} />
        <TaskSearchInput type="text" placeholder="Search" />
        <EquinoxArt />
      </TaskSearch>
      {taskApps.map((a) => (
        <TaskApp key={a.name} aria-label={a.name} $running={a.running}>{a.icon}</TaskApp>
      ))}
      <Tray>
        <IconButton $w={48} aria-label="Show hidden icons">
          <Line size={18} w={2.6}><path d="m2 17 10-10 10 10" /></Line>
        </IconButton>
        <IconButton $w={48} aria-label="Update"><SyncIcon /></IconButton>
        <IconButton $w={48} aria-label="OneDrive"><CloudOffIcon /></IconButton>
        <TrayGroup aria-label="Network, volume and battery">
          <Line w={1.7}><path d="M16 1H3Q1 1 1 3v14q0 2 2 2h17M8 19v4M13 19v4M5 23h13M17 1h6v6q0 2-2 2h-2q-2 0-2-2zM17 4.5h6M20.5 9v14" /></Line>
          <Line w={1.7}><path d="M1 9v6h4l6 5V4L5 9zM14 8.5q2 3.5 0 7M17.5 6q4 6 0 12M20.5 3.5q5.5 8.5 0 17" /></Line>
          <Line w={1.9}><rect x="1" y="5" width="19.5" height="14" rx="3" /><path d="M22.5 10.5v3" /><path d="M3.5 7.5h5v9h-5z" fill="#fff" stroke="none" /></Line>
        </TrayGroup>
        <Clock>12:24 PM<br />3/20/2025</Clock>
        <IconButton $w={34} aria-label="Notifications"><BellIcon /></IconButton>
      </Tray>
    </Taskbar>
  );
}

export default function App() {
  return (
    <Desktop>
      <GlobalStyle />
      <Browser>
        <BrowserTabs />
        <BrowserToolbar />
        <Viewport>
          <SignInPage />
          <Scrollbar>
            <ScrollArrow />
            <ScrollThumb />
            <ScrollArrow down />
          </Scrollbar>
        </Viewport>
      </Browser>
      <SystemTaskbar />
      <Menu />
    </Desktop>
  );
}
